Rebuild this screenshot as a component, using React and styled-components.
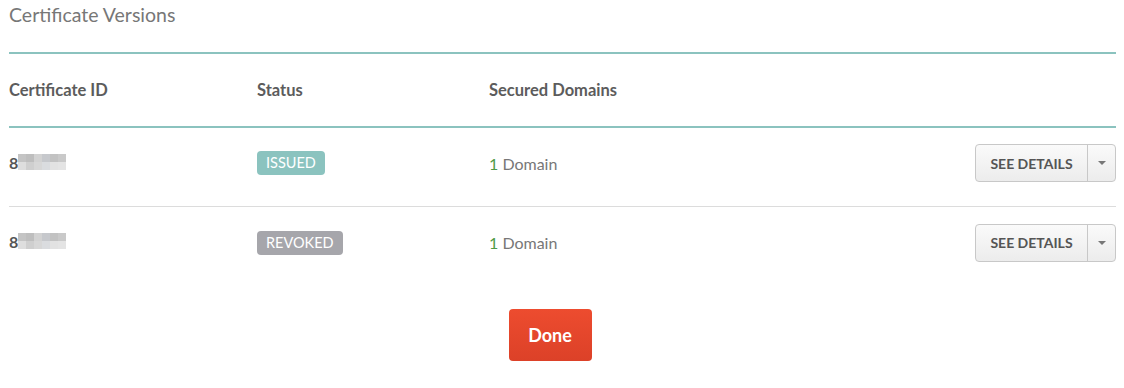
import React from 'react'
import styled, { createGlobalStyle } from 'styled-components'

const Global = createGlobalStyle`
    body {
        margin: 0;
        background: #fff;
        font-family: Lato, "Open Sans", sans-serif;
    }
`

const Page = styled.div`
    padding: 0 8px 0 9px;
`

const Title = styled.h2`
    margin: 0;
    padding-top: 4px;
    font-size: 19.5px;
    font-weight: 400;
    color: #777;
    line-height: 22px;
    border-bottom: 2px solid #8bc3bf;
    box-sizing: border-box;
    height: 54px;
`

const Row = styled.div`
    display: grid;
    grid-template-columns: 248px 232px 1fr auto;
    align-items: center;
    height: ${p => p.h}px;
    padding-bottom: ${p => p.pb || 0}px;
    border-bottom: ${p => p.line};
    box-sizing: border-box;
`

const HeadCell = styled.div`
    font-size: 16.5px;
    font-weight: 700;
    color: #5c5c5c;
`

const IdCell = styled.div`
    display: flex;
    align-items: flex-start;
    align-self: start;
    padding-top: ${p => p.top}px;
    font-size: 16px;
    font-weight: 700;
    color: #555;
`

const Blur = styled.div`
    display: grid;
    grid-template-columns: repeat(6, 8px);
    grid-template-rows: repeat(2, 8px);
    margin-top: 1px;
`

const Pix = styled.span`
    background: ${p => p.c};
`

const Badge = styled.span`
    display: inline-block;
    padding: 0 9px;
    height: 24px;
    line-height: 24px;
    border-radius: 4px;
    font-size: 14.5px;
    color: #fff;
    background: ${p => p.bg};
`

const Domains = styled.div`
    font-size: 16px;
    color: #777;
`

const Count = styled.span`
    color: #4f9a46;
`

const SplitButton = styled.div`
    display: flex;
    height: 38px;
    border: 1px solid #c8c8c8;
    border-radius: 4px;
    background: linear-gradient(#fafafa, #ececec);
    box-sizing: border-box;
`

const MainPart = styled.button`
    border: none;
    background: none;
    width: 112px;
    font-family: Lato, sans-serif;
    font-size: 14px;
    font-weight: 700;
    color: #555;
    border-right: 1px solid #c8c8c8;
    padding: 0;
`

const Caret = styled.button`
    border: none;
    background: none;
    width: 27px;
    display: flex;
    align-items: center;
    justify-content: center;
    padding: 0;
    &::after {
        content: '';
        border-left: 4px solid transparent;
        border-right: 4px solid transparent;
        border-top: 4px solid #777;
    }
`

const Footer = styled.div`
    display: flex;
    justify-content: center;
    padding: 23px 25px 0 0;
`

const Done = styled.button`
    width: 83px;
    height: 52px;
    border: none;
    border-radius: 4px;
    background: linear-gradient(#ed4c2f, #dc4128);
    color: #fff;
    font-family: Lato, sans-serif;
    font-size: 18px;
    font-weight: 700;
`

const blurColors = [
    ['#c4c4c4', '#bebebe', '#d2d2d2', '#c6c8cc', '#c2c2c2', '#c9c9c9'],
    ['#dedede', '#cfcfcf', '#d7d7d7', '#dadcdf', '#e2e2e2', '#e4e4e4'],
]

const rows = [
    { status: 'ISSUED', bg: '#8bc3bf', h: 79 },
    { status: 'REVOKED', bg: '#a6a6ab', h: 79 },
]

function Masked() {
    return (
        <Blur>
            {blurColors.flat().map((c, i) => <Pix key={i} c={c} />)}
        </Blur>
    )
}

export default function App() {
    return (
        <Page>
            <Global />
            <Title>Certificate Versions</Title>
            <Row h={74} line="2px solid #8bc3bf">
                <HeadCell>Certificate ID</HeadCell>
                <HeadCell>Status</HeadCell>
                <HeadCell>Secured Domains</HeadCell>
                <div />
            </Row>
            {rows.map((r, i) => (
                <Row key={r.status} h={r.h} pb={8} line={i === 0 ? '1px solid #dcdcdc' : 'none'}>
                    <IdCell top={25}>8<Masked /></IdCell>
                    <div><Badge bg={r.bg}>{r.status}</Badge></div>
                    <Domains><Count>1</Count> Domain</Domains>
                    <SplitButton>
                        <MainPart>SEE DETAILS</MainPart>
                        <Caret />
                    </SplitButton>
                </Row>
            ))}
            <Footer>
                <Done>Done</Done>
            </Footer>
        </Page>
    )
}
